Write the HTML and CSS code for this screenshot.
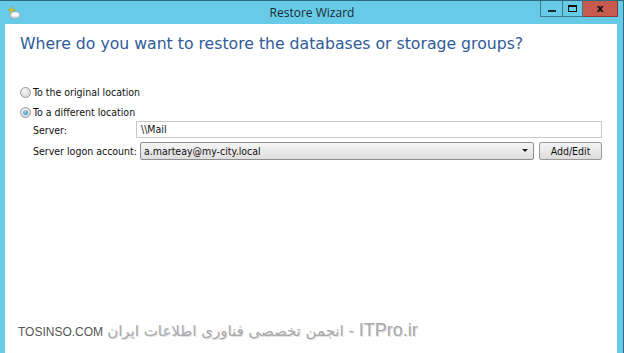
FILE: index.html
```html
<!DOCTYPE html>
<html>
<head>
<meta charset="utf-8">
<link rel="stylesheet" href="styles.css">
</head>
<body>
<div class="window">
  <div class="titlebar">
    <div class="appicon">
      <svg class="appicon-svg" width="13" height="13" viewBox="0 0 13 13">
        <ellipse cx="7" cy="9" rx="5.2" ry="3.4" fill="#dfe6ea" stroke="#8ea1ad" stroke-width="0.9"/>
        <ellipse cx="7" cy="8.2" rx="3.6" ry="1.9" fill="#ffffff"/>
        <path d="M3.5 0.5 L4.6 3.2 L7.2 3.8 L4.6 4.8 L3.5 7.5 L2.4 4.8 L0 3.8 L2.4 3.2 Z" fill="#e9c21e" stroke="#b8941a" stroke-width="0.4"/>
      </svg>
    </div>
    <div class="title">Restore Wizard</div>
    <div class="controls">
      <div class="btn min"><span class="min-glyph"></span></div>
      <div class="btn max"><span class="max-glyph"></span></div>
      <div class="btn close"><span class="close-glyph">x</span></div>
    </div>
  </div>
  <div class="content">
    <h1 class="heading">Where do you want to restore the databases or storage groups?</h1>
    <div class="options">
      <label class="radio-row"><span class="radio"></span>To the original location</label>
      <label class="radio-row checked"><span class="radio"><span class="dot"></span></span>To a different location</label>
      <div class="field-row server-row">
        <span class="field-label server-label">Server:</span>
        <div class="textbox">\\Mail</div>
      </div>
      <div class="field-row account-row">
        <span class="field-label account-label">Server logon account:</span>
        <div class="select"><span class="select-text">a.marteay@my-city.local</span><span class="arrow"></span></div>
        <div class="button">Add/Edit</div>
      </div>
    </div>
    <div class="watermark">
      <span class="wm-site">TOSINSO.COM</span>
      <span class="wm-fa" dir="rtl"><span class="wm-big">ITPro.ir</span> - انجمن تخصصی فناوری اطلاعات ایران</span>
    </div>
  </div>
</div>
</body>
</html>
```
FILE: styles.css
```css
html, body {
  margin: 0;
  padding: 0;
  width: 624px;
  height: 353px;
  overflow: hidden;
  background: #67cbe8;
}
.window {
  box-sizing: border-box;
  width: 624px;
  height: 353px;
  border-top: 1px solid #2c6a80;
  border-right: 1px solid #2c6a80;
  display: flex;
  flex-direction: column;
  padding: 0 6px 0 5px;
  background: #67cbe8;
}
.titlebar {
  height: 23px;
  display: flex;
  align-items: flex-start;
}
.appicon {
  flex-shrink: 0;
  width: 13px;
  height: 13px;
  margin: 5px 0 0 3px;
}
.appicon-svg {
  display: block;
}
.title {
  flex: 1;
  text-align: center;
  font-family: "Open Sans", "Noto Sans", sans-serif;
  font-size: 12px;
  color: #1b2a33;
  line-height: 23px;
  padding-left: 63px;
}
.controls {
  display: flex;
  height: 16px;
  margin-right: -1px;
}
.btn {
  box-sizing: border-box;
  height: 16px;
  border: 1px solid #3b7a91;
  border-top: none;
  display: flex;
  align-items: center;
  justify-content: center;
}
.btn.min { width: 22px; border-right: none; }
.btn.max { width: 21px; }
.btn.close {
  width: 35px;
  background: #c65a4e;
  border-color: #8a3a32;
  border-left: none;
}
.min-glyph {
  display: block;
  width: 8px;
  height: 2px;
  background: #1b2a33;
  margin-top: 5px;
}
.max-glyph {
  display: block;
  box-sizing: border-box;
  width: 9px;
  height: 7px;
  border: 1px solid #111;
  border-top-width: 2px;
}
.close-glyph {
  font-family: "DejaVu Sans", sans-serif;
  font-weight: bold;
  font-size: 11px;
  color: #111;
  line-height: 14px;
}
.content {
  flex: 1;
  background: #ffffff;
  display: flex;
  flex-direction: column;
  padding-left: 15px;
}
.heading {
  margin: 10px 0 0 0;
  font-family: "DejaVu Sans", Verdana, sans-serif;
  font-weight: normal;
  font-size: 15.7px;
  line-height: 20px;
  color: #2f5b98;
  white-space: nowrap;
}
.options {
  margin-top: 28px;
  font-family: "DejaVu Sans Condensed", "DejaVu Sans", Tahoma, sans-serif;
  font-size: 10.5px;
  color: #111;
}
.radio-row {
  display: flex;
  align-items: center;
  height: 20px;
}
.radio {
  box-sizing: border-box;
  width: 11px;
  height: 11px;
  border-radius: 50%;
  border: 1px solid #9a9a9a;
  background: radial-gradient(circle at 40% 35%, #f8f8f8, #cfcfcf);
  margin-right: 2px;
  display: flex;
  align-items: center;
  justify-content: center;
}
.dot {
  width: 5px;
  height: 5px;
  border-radius: 50%;
  background: radial-gradient(circle at 40% 35%, #9fd0ee, #2f7fb5);
}
.field-row {
  display: flex;
  align-items: center;
  padding-left: 13px;
  white-space: nowrap;
}
.server-row {
  height: 17px;
  margin-top: -1px;
}
.account-row {
  height: 21px;
  margin-top: 2px;
}
.server-label { width: 103px; }
.account-label { width: 107px; }
.textbox {
  box-sizing: border-box;
  flex: 1;
  height: 17px;
  margin-right: 15px;
  border: 1px solid #c8c8c8;
  padding-left: 4px;
  line-height: 15px;
}
.select {
  box-sizing: border-box;
  width: 394px;
  height: 18px;
  border: 1px solid #8e8e8e;
  border-radius: 2px;
  background: linear-gradient(#f6f6f6, #dedede);
  display: flex;
  align-items: center;
  padding-left: 3px;
}
.select-text {
  flex: 1;
}
.arrow {
  width: 0;
  height: 0;
  border-left: 3px solid transparent;
  border-right: 3px solid transparent;
  border-top: 3px solid #222;
  margin-right: 5px;
}
.button {
  box-sizing: border-box;
  width: 63px;
  height: 18px;
  margin-left: 5px;
  border: 1px solid #9a9a9a;
  border-radius: 2px;
  background: linear-gradient(#f4f4f4, #dcdcdc);
  text-align: center;
  line-height: 16px;
}
.watermark {
  margin-top: auto;
  margin-bottom: 12px;
  margin-left: -2px;
  display: flex;
  align-items: baseline;
  gap: 4px;
  color: #a9a9a9;
  text-shadow: 1px 1px 0 #e2e2e2;
}
.wm-site {
  font-family: "Liberation Sans", Arial, sans-serif;
  font-size: 12px;
  color: #555;
  text-shadow: none;
}
.wm-fa {
  font-family: "DejaVu Sans", "Noto Sans", sans-serif;
  font-size: 15px;
}
.wm-big {
  font-family: "Liberation Sans", Arial, sans-serif;
  font-size: 18px;
}
```
